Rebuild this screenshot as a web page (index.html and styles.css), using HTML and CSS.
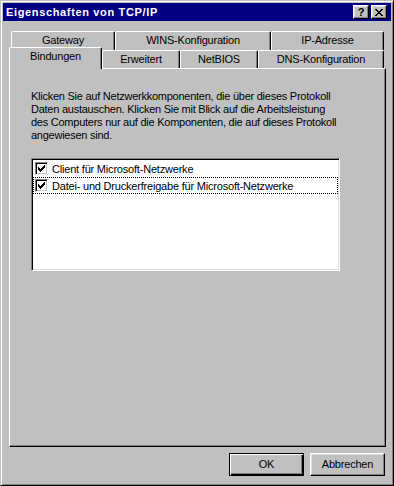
FILE: index.html
```html
<!DOCTYPE html>
<html lang="de">

<head>
  <meta name="viewport" content="width=device-width, initial-scale=1.0" />
  <title>Eigenschaften von TCP/IP</title>
  <link rel="stylesheet" href="styles.css">
</head>

<body>
  <div class="window">
    <div class="titlebar">
      <span class="title">Eigenschaften von TCP/IP</span>
      <div class="caption-buttons">
        <div class="cap-btn help">?</div>
        <div class="cap-btn close">
          <svg width="8" height="7" viewBox="0 0 8 7" shape-rendering="crispEdges">
            <path d="M0 0h2v1h-2z M6 0h2v1h-2z M1 1h2v1h-2z M5 1h2v1h-2z M2 2h4v1h-4z M3 3h2v1h-2z M2 4h4v1h-4z M1 5h2v1h-2z M5 5h2v1h-2z M0 6h2v1h-2z M6 6h2v1h-2z" fill="#000" />
          </svg>
        </div>
      </div>
    </div>

    <div class="tabs">
      <div class="tab-row back">
        <div class="tab w-gateway">Gateway</div>
        <div class="tab w-wins">WINS-Konfiguration</div>
        <div class="tab w-ip">IP-Adresse</div>
      </div>
      <div class="tab-row front">
        <div class="tab active w-bind">Bindungen</div>
        <div class="tab w-erw">Erweitert</div>
        <div class="tab w-netbios">NetBIOS</div>
        <div class="tab w-dns">DNS-Konfiguration</div>
      </div>
    </div>

    <div class="panel">
      <p class="hint">Klicken Sie auf Netzwerkkomponenten, die über dieses Protokoll<br>Daten austauschen. Klicken Sie mit Blick auf die Arbeitsleistung<br>des Computers nur auf die Komponenten, die auf dieses Protokoll<br>angewiesen sind.</p>

      <div class="listbox">
        <div class="item">
          <span class="check">
            <svg width="7" height="7" viewBox="0 0 7 7" shape-rendering="crispEdges">
              <path d="M6 0h1v1h-1z M5 1h2v1h-2z M0 2h1v1h-1z M4 2h3v1h-3z M0 3h2v1h-2z M3 3h3v1h-3z M0 4h5v1h-5z M1 5h3v1h-3z M2 6h1v1h-1z" fill="#000" />
            </svg>
          </span>
          <span>Client für Microsoft-Netzwerke</span>
        </div>
        <div class="item focus">
          <span class="check">
            <svg width="7" height="7" viewBox="0 0 7 7" shape-rendering="crispEdges">
              <path d="M6 0h1v1h-1z M5 1h2v1h-2z M0 2h1v1h-1z M4 2h3v1h-3z M0 3h2v1h-2z M3 3h3v1h-3z M0 4h5v1h-5z M1 5h3v1h-3z M2 6h1v1h-1z" fill="#000" />
            </svg>
          </span>
          <span>Datei- und Druckerfreigabe für Microsoft-Netzwerke</span>
        </div>
      </div>
    </div>

    <div class="buttons">
      <div class="btn default">OK</div>
      <div class="btn">Abbrechen</div>
    </div>
  </div>
</body>

</html>
```

FILE: styles.css
```css
* {
  padding: 0;
  margin: 0;
  box-sizing: border-box;
}

body {
  background: #c0c0c0;
  font-family: "Liberation Sans", Arial, sans-serif;
  font-size: 11px;
  letter-spacing: -0.2px;
  color: #000;
}

.window {
  width: 394px;
  height: 486px;
  display: flex;
  flex-direction: column;
  background: #c0c0c0;
  border: 1px solid;
  border-color: #c0c0c0 #000 #000 #c0c0c0;
  box-shadow: inset 1px 1px #fff, inset -1px -1px #808080;
  padding: 2px;
}

/* title bar */
.titlebar {
  height: 18px;
  flex: none;
  display: flex;
  align-items: center;
  justify-content: space-between;
  background: #000080;
  padding: 0 4px 0 3px;
}

.title {
  color: #fff;
  font-weight: bold;
  letter-spacing: 0.65px;
  line-height: 18px;
  white-space: nowrap;
}

.caption-buttons {
  display: flex;
  gap: 2px;
}

.cap-btn {
  width: 16px;
  height: 14px;
  display: flex;
  align-items: center;
  justify-content: center;
  background: #c0c0c0;
  border: 1px solid;
  border-color: #fff #000 #000 #fff;
  box-shadow: inset -1px -1px #808080, inset 1px 1px #dfdfdf;
}

.cap-btn.help {
  font-weight: bold;
  letter-spacing: 0;
  line-height: 12px;
}

/* tabs */
.tabs {
  flex: none;
  margin: 10px 5px 0 6px;
  padding: 0 2px;
}

.tab-row {
  display: flex;
  align-items: flex-start;
}

.tab-row.back {
  height: 19px;
}

.tab-row.front {
  height: 18px;
}

.tab {
  height: 100%;
  flex: none;
  text-align: center;
  line-height: 13px;
  padding-top: 2px;
  white-space: nowrap;
  background: #c0c0c0;
  border-top: 1px solid #fff;
  border-left: 1px solid #fff;
  border-right: 1px solid #000;
  border-radius: 2px 2px 0 0;
  box-shadow: inset -1px 0 #808080;
}

.tab.active {
  position: relative;
  z-index: 1;
  height: 22px;
  margin: -3px 0 -1px -2px;
}

.w-gateway { width: 104px; }
.w-wins { width: 156px; }
.w-ip { width: 113px; }
.w-bind { width: 93px; }
.w-erw { width: 78px; }
.w-netbios { width: 78px; }
.w-dns { width: 126px; }

/* panel */
.panel {
  flex: none;
  height: 379px;
  margin: 0 5px 0 6px;
  padding: 21px 0 0 21px;
  border: 1px solid;
  border-color: #fff #000 #000 #fff;
  box-shadow: inset -1px -1px #808080;
}

.hint {
  line-height: 13px;
  letter-spacing: -0.25px;
  white-space: nowrap;
}

.listbox {
  margin-top: 16px;
  width: 309px;
  height: 113px;
  background: #fff;
  border: 1px solid;
  border-color: #808080 #fff #fff #808080;
  box-shadow: inset 1px 1px #000, inset -1px -1px #dfdfdf;
  padding: 1px;
}

.item {
  height: 17px;
  display: flex;
  align-items: center;
  gap: 4px;
  padding-left: 2px;
  white-space: nowrap;
}

.item.focus {
  outline: 1px dotted #000;
  outline-offset: -1px;
}

.check {
  width: 13px;
  height: 13px;
  flex: none;
  display: flex;
  align-items: center;
  justify-content: center;
  background: #fff;
  border: 1px solid;
  border-color: #808080 #fff #fff #808080;
  box-shadow: inset 1px 1px #000, inset -1px -1px #c0c0c0;
}

/* dialog buttons */
.buttons {
  flex: none;
  display: flex;
  justify-content: flex-end;
  gap: 6px;
  margin-top: 6px;
  padding-right: 6px;
}

.btn {
  width: 75px;
  height: 23px;
  text-align: center;
  line-height: 21px;
  border: 1px solid;
  border-color: #fff #000 #000 #fff;
  box-shadow: inset -1px -1px #808080, inset 1px 1px #dfdfdf;
}

.btn.default {
  border-color: #000;
  box-shadow: inset 1px 1px #fff, inset -1px -1px #000, inset -2px -2px #808080;
}
```
